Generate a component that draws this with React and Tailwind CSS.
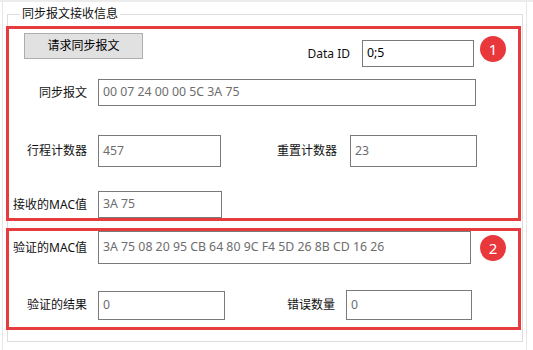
const FONT = { fontFamily: '"Noto Sans", "Noto Sans CJK SC", sans-serif' }

function Field({ value, w, h, dark }) {
  return (
    <div
      className={`flex items-center border border-[#7a7a7a] bg-white pl-[4px] text-[12.3px] whitespace-nowrap ${dark ? 'text-black' : 'text-[#6d6d6d]'}`}
      style={{ width: w, height: h }}
    >
      {value}
    </div>
  )
}

function Label({ children, w }) {
  return (
    <div className="flex justify-end text-[12px] text-[#111] whitespace-nowrap" style={{ width: w }}>
      {children}
    </div>
  )
}

function Badge({ n, className }) {
  return (
    <div className={`absolute w-[26px] h-[26px] rounded-full bg-[#e8383b] text-white text-[15px] flex items-center justify-center ${className}`}>
      {n}
    </div>
  )
}

export default function App() {
  return (
    <div className="w-[533px] h-[350px] bg-white border-t-2 border-[#ececec] pl-[2px] overflow-hidden" style={FONT}>
      <div className="w-[525px] h-full border-l border-r border-[#e6e6e6] pt-[12px] pl-[4px]">
        <div className="relative w-[516px] h-[328px] border border-[#dcdcdc]">
          <span className="absolute left-[12px] top-[-9px] bg-white px-[2px] text-[12px] leading-[16px] text-[#111]">
            同步报文接收信息
          </span>

          {/* box 1 */}
          <div className="relative mt-[11px] ml-[-2px] w-[515px] border-[3px] border-[#e63c3f]">
            <div className="flex items-start h-[38px]">
              <button className="ml-[15px] mt-[4px] w-[119px] h-[26px] bg-[#e1e1e1] border border-[#adadad] text-[12px] text-black">
                请求同步报文
              </button>
              <div className="ml-auto mr-[44px] mt-[11px] flex items-center gap-[12px]">
                <span className="text-[12px] text-[#111]">Data ID</span>
                <Field value="0;5" w={112} h={27} dark />
              </div>
            </div>
            <div className="flex items-center gap-[11px] mt-[12px]">
              <Label w={78}>同步报文</Label>
              <Field value="00 07 24 00 00 5C 3A 75" w={378} h={27} />
            </div>
            <div className="flex items-center mt-[29px]">
              <Label w={78}>行程计数器</Label>
              <div className="ml-[11px]">
                <Field value="457" w={123} h={32} />
              </div>
              <Label w={116}>重置计数器</Label>
              <div className="ml-[13px]">
                <Field value="23" w={127} h={32} />
              </div>
            </div>
            <div className="flex items-center gap-[11px] mt-[24px]">
              <Label w={78}>接收的MAC值</Label>
              <Field value="3A 75" w={124} h={27} />
            </div>
            <Badge n="1" className="left-[471px] top-[7px]" />
          </div>

          {/* box 2 */}
          <div className="relative mt-[7px] ml-[-2px] w-[515px] border-[3px] border-[#e63c3f] pb-[7px]">
            <div className="flex items-center gap-[11px]">
              <Label w={78}>验证的MAC值</Label>
              <Field value="3A 75 08 20 95 CB 64 80 9C F4 5D 26 8B CD 16 26" w={373} h={33} />
            </div>
            <div className="flex items-center mt-[26px]">
              <Label w={78}>验证的结果</Label>
              <div className="ml-[11px]">
                <Field value="0" w={127} h={29} />
              </div>
              <Label w={110}>错误数量</Label>
              <div className="ml-[11px]">
                <Field value="0" w={126} h={30} />
              </div>
            </div>
            <Badge n="2" className="left-[471px] top-[4px]" />
          </div>
        </div>
      </div>
    </div>
  )
}
